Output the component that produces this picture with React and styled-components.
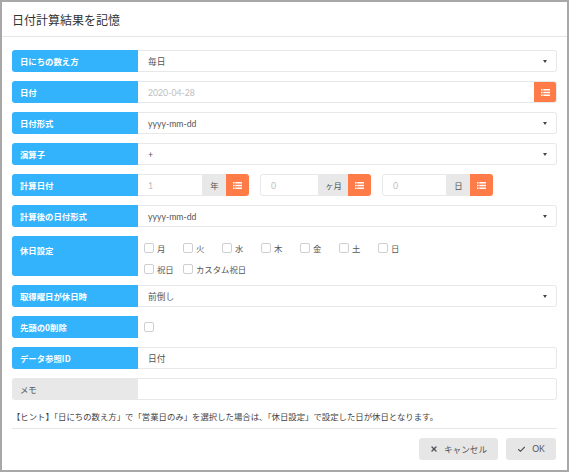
import React from 'react';
import styled, { createGlobalStyle } from 'styled-components';
import { X, Check } from 'lucide-react';

const GlobalStyle = createGlobalStyle`
  html, body {
    margin: 0;
    padding: 0;
    background: #ffffff;
  }
  body {
    font-family: Lato, "Noto Sans CJK JP", "Noto Sans", sans-serif;
  }
  * {
    box-sizing: border-box;
  }
`;

const Dialog = styled.div`
  width: 569px;
  height: 472px;
  border: 2px solid #a8a8a8;
  display: flex;
  flex-direction: column;
  background: #fff;
`;

const Header = styled.div`
  height: 35px;
  padding: 0 10px;
  display: flex;
  align-items: center;
  border-bottom: 1px solid #e6e6e6;
  font-size: 12px;
  color: #333;
  font-family: "Noto Sans CJK JP", sans-serif;
`;

const Body = styled.div`
  padding: 13px 10px 0 10px;
  display: flex;
  flex-direction: column;
  gap: 9px;
`;

const Row = styled.div`
  display: flex;
  height: ${(p) => p.height || 22}px;
`;

const Label = styled.div`
  width: 126px;
  flex-shrink: 0;
  display: flex;
  align-items: ${(p) => (p.top ? 'flex-start' : 'center')};
  padding: ${(p) => (p.top ? '8px 8px 0' : '0 8px')};
  background: ${(p) => (p.muted ? '#e8e8e8' : '#33b3fb')};
  color: ${(p) => (p.muted ? '#555' : '#fff')};
  font-weight: ${(p) => (p.muted ? 400 : 700)};
  font-size: 8.4px;
  border-radius: 3px 0 0 3px;
  font-family: "Noto Sans CJK JP", sans-serif;
`;

const Field = styled.div`
  flex: 1;
  display: flex;
  align-items: center;
  border: 1px solid #e8e8e8;
  border-left: none;
  border-radius: 0 3px 3px 0;
  padding: 0 0 0 10px;
  font-size: 8.7px;
  color: ${(p) => (p.placeholder ? '#bdbdbd' : '#555')};
  overflow: hidden;
`;

const FieldText = styled.span`
  flex: 1;
`;

const Caret = styled.span`
  width: 0;
  height: 0;
  margin-right: 9px;
  border-left: 2.5px solid transparent;
  border-right: 2.5px solid transparent;
  border-top: 3px solid #444;
`;

const OrangeButton = styled.div`
  width: 23px;
  height: 22px;
  flex-shrink: 0;
  background: #ff7b47;
  border-radius: 0 3px 3px 0;
  display: flex;
  align-items: center;
  justify-content: center;
  margin: ${(p) => (p.inside ? '-1px -1px -1px 0' : '0')};
`;

const ListIcon = () => (
  <svg width="9" height="7" viewBox="0 0 9 7">
    {[0, 2.75, 5.5].map((y) => (
      <g key={y} fill="#fff">
        <rect x="0" y={y} width="1.6" height="1.5" />
        <rect x="2.3" y={y} width="6.7" height="1.5" />
      </g>
    ))}
  </svg>
);

const NumberGroups = styled.div`
  flex: 1;
  display: flex;
  gap: 11px;
`;

const NumberGroup = styled.div`
  width: 111px;
  display: flex;
`;

const NumberInput = styled.div`
  flex: 1;
  display: flex;
  align-items: center;
  padding-left: 10px;
  border: 1px solid #e8e8e8;
  border-radius: ${(p) => (p.first ? '0' : '3px 0 0 3px')};
  border-left: ${(p) => (p.first ? 'none' : '1px solid #e8e8e8')};
  font-size: 8.7px;
  color: #bdbdbd;
`;

const Addon = styled.div`
  display: flex;
  align-items: center;
  justify-content: center;
  padding: 0 6px;
  min-width: 23px;
  background: #e8e8e8;
  color: #555;
  font-size: 8.4px;
  font-family: "Noto Sans CJK JP", sans-serif;
`;

const CheckArea = styled.div`
  flex: 1;
  padding: 6px 6px 0;
  display: flex;
  flex-direction: column;
  gap: 9px;
`;

const CheckLine = styled.div`
  display: flex;
  gap: 6px;
  height: 12px;
`;

const CheckItem = styled.label`
  min-width: 33px;
  display: flex;
  align-items: center;
  font-size: 8.4px;
  color: #555;
  font-family: "Noto Sans CJK JP", sans-serif;
`;

const Box = styled.span`
  width: 10px;
  height: 10px;
  flex-shrink: 0;
  border: 1px solid #cfcfcf;
  border-radius: 2px;
  background: #fff;
  margin-right: 3px;
`;

const PlainCell = styled.div`
  flex: 1;
  display: flex;
  align-items: center;
  padding-left: 6px;
`;

const Hint = styled.div`
  height: 13px;
  font-size: 8.4px;
  color: #444;
  display: flex;
  align-items: center;
  font-family: "Noto Sans CJK JP", sans-serif;
`;

const Divider = styled.div`
  margin: 6px 10px 0;
  border-top: 1px solid #e6e6e6;
`;

const Footer = styled.div`
  display: flex;
  justify-content: flex-end;
  gap: 8px;
  padding: 9px 11px 0 10px;
`;

const FooterButton = styled.div`
  width: ${(p) => p.width}px;
  height: 22px;
  background: #e6e6e6;
  border-radius: 3px;
  display: flex;
  align-items: center;
  justify-content: center;
  gap: 6px;
  font-size: 8.6px;
  color: #555;
  font-family: Lato, "Noto Sans CJK JP", sans-serif;
`;

const SelectField = ({ value }) => (
  <Field>
    <FieldText>{value}</FieldText>
    <Caret />
  </Field>
);

const CheckOption = ({ label }) => (
  <CheckItem>
    <Box />
    {label}
  </CheckItem>
);

const groups = [
  { value: '1', unit: '年' },
  { value: '0', unit: 'ヶ月' },
  { value: '0', unit: '日' }
];

const App = () => (
  <>
    <GlobalStyle />
    <Dialog>
      <Header>日付計算結果を記憶</Header>
      <Body>
        <Row>
          <Label>日にちの数え方</Label>
          <SelectField value="毎日" />
        </Row>
        <Row>
          <Label>日付</Label>
          <Field placeholder="true">
            <FieldText>2020-04-28</FieldText>
            <OrangeButton inside>
              <ListIcon />
            </OrangeButton>
          </Field>
        </Row>
        <Row>
          <Label>日付形式</Label>
          <SelectField value="yyyy-mm-dd" />
        </Row>
        <Row>
          <Label>演算子</Label>
          <SelectField value="+" />
        </Row>
        <Row>
          <Label>計算日付</Label>
          <NumberGroups>
            {groups.map((g, i) => (
              <NumberGroup key={g.unit}>
                <NumberInput first={i === 0}>{g.value}</NumberInput>
                <Addon>{g.unit}</Addon>
                <OrangeButton>
                  <ListIcon />
                </OrangeButton>
              </NumberGroup>
            ))}
          </NumberGroups>
        </Row>
        <Row>
          <Label>計算後の日付形式</Label>
          <SelectField value="yyyy-mm-dd" />
        </Row>
        <Row height={40}>
          <Label top>休日設定</Label>
          <CheckArea>
            <CheckLine>
              {['月', '火', '水', '木', '金', '土', '日'].map((d) => (
                <CheckOption key={d} label={d} />
              ))}
            </CheckLine>
            <CheckLine>
              <CheckOption label="祝日" />
              <CheckOption label="カスタム祝日" />
            </CheckLine>
          </CheckArea>
        </Row>
        <Row>
          <Label>取得曜日が休日時</Label>
          <SelectField value="前倒し" />
        </Row>
        <Row>
          <Label>先頭の0削除</Label>
          <PlainCell>
            <Box />
          </PlainCell>
        </Row>
        <Row>
          <Label>データ参照ID</Label>
          <Field>
            <FieldText>日付</FieldText>
          </Field>
        </Row>
        <Row>
          <Label muted>メモ</Label>
          <Field />
        </Row>
        <Hint>【ヒント】「日にちの数え方」で「営業日のみ」を選択した場合は、「休日設定」で設定した日が休日となります。</Hint>
      </Body>
      <Divider />
      <Footer>
        <FooterButton width={79}>
          <X size={8} strokeWidth={4} color="#555" />
          キャンセル
        </FooterButton>
        <FooterButton width={50}>
          <Check size={9} strokeWidth={3} color="#555" />
          OK
        </FooterButton>
      </Footer>
    </Dialog>
  </>
);

export default App;
